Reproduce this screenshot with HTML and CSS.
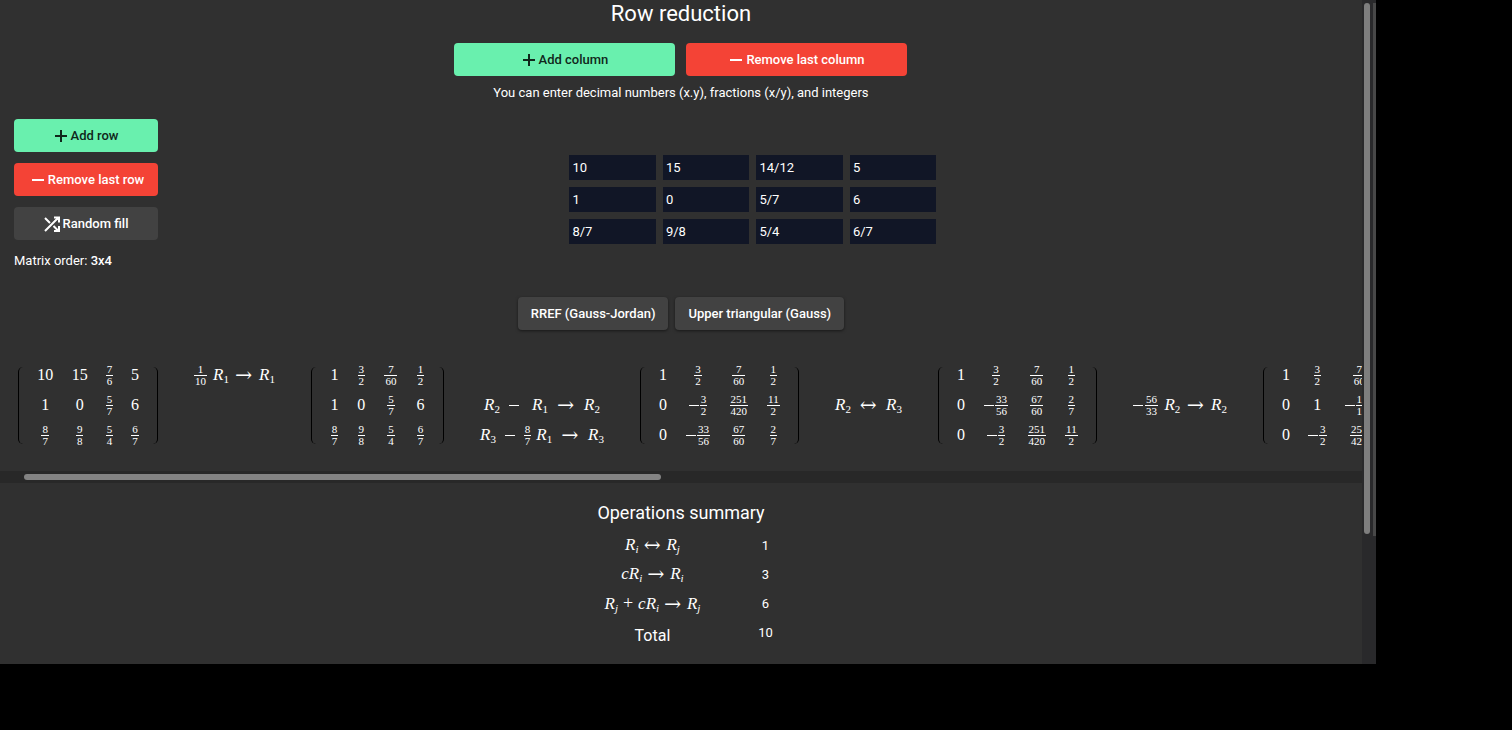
FILE: index.html
```html
<!DOCTYPE html>
<html lang="en">
<head>
<meta charset="utf-8">
<title>Row reduction</title>
<link rel="stylesheet" href="styles.css">
</head>
<body>
<div class="app">
<main class="content">
  <h1 class="title">Row reduction</h1>
  <div class="column-actions">
    <button class="btn btn-add" type="button"><svg class="icon" viewBox="0 0 14 14"><path d="M7 1v12M1 7h12"/></svg>Add column</button>
    <button class="btn btn-remove" type="button"><svg class="icon" viewBox="0 0 14 14"><path d="M1 7h12"/></svg>Remove last column</button>
  </div>
  <p class="hint">You can enter decimal numbers (x.y), fractions (x/y), and integers</p>
  <section class="editor">
    <div class="row-actions">
      <button class="btn btn-add" type="button"><svg class="icon" viewBox="0 0 14 14"><path d="M7 1v12M1 7h12"/></svg>Add row</button>
      <button class="btn btn-remove btn-tight" type="button"><svg class="icon" viewBox="0 0 14 14"><path d="M1 7h12"/></svg>Remove last row</button>
      <button class="btn btn-flat" type="button"><svg class="icon icon-shuffle" viewBox="0 0 16 16"><path d="M1 2l5 5M1 15L14 2M10 1.500h5v5M9.500 10L14 14.500M15 10v5h-5"/></svg>Random fill</button>
      <p class="order">Matrix order: <b>3x4</b></p>
    </div>
    <div class="grid-area">
      <div class="grid">
        <input aria-label="Row 1, column 1" value="10"><input aria-label="Row 1, column 2" value="15"><input aria-label="Row 1, column 3" value="14/12"><input aria-label="Row 1, column 4" value="5">
        <input aria-label="Row 2, column 1" value="1"><input aria-label="Row 2, column 2" value="0"><input aria-label="Row 2, column 3" value="5/7"><input aria-label="Row 2, column 4" value="6">
        <input aria-label="Row 3, column 1" value="8/7"><input aria-label="Row 3, column 2" value="9/8"><input aria-label="Row 3, column 3" value="5/4"><input aria-label="Row 3, column 4" value="6/7">
      </div>
    </div>
  </section>
  <div class="methods">
    <button class="btn btn-flat btn-raised" type="button">RREF (Gauss-Jordan)</button>
    <button class="btn btn-flat btn-raised" type="button">Upper triangular (Gauss)</button>
  </div>
  <section class="steps" aria-label="Steps">
    <div class="matrix matrix-md"><table>
      <tr><td>10</td><td>15</td><td><span class="frac"><i>7</i><i>6</i></span></td><td>5</td></tr>
      <tr><td>1</td><td>0</td><td><span class="frac"><i>5</i><i>7</i></span></td><td>6</td></tr>
      <tr><td><span class="frac"><i>8</i><i>7</i></span></td><td><span class="frac"><i>9</i><i>8</i></span></td><td><span class="frac"><i>5</i><i>4</i></span></td><td><span class="frac"><i>6</i><i>7</i></span></td></tr>
    </table></div>
    <div class="ops ops-scale">
      <div class="op row-1"><span class="frac"><i>1</i><i>10</i></span><var>R<sub>1</sub></var><span class="arrow">→</span><var>R<sub>1</sub></var></div>
    </div>
    <div class="matrix matrix-sm"><table>
      <tr><td>1</td><td><span class="frac"><i>3</i><i>2</i></span></td><td><span class="frac"><i>7</i><i>60</i></span></td><td><span class="frac"><i>1</i><i>2</i></span></td></tr>
      <tr><td>1</td><td>0</td><td><span class="frac"><i>5</i><i>7</i></span></td><td>6</td></tr>
      <tr><td><span class="frac"><i>8</i><i>7</i></span></td><td><span class="frac"><i>9</i><i>8</i></span></td><td><span class="frac"><i>5</i><i>4</i></span></td><td><span class="frac"><i>6</i><i>7</i></span></td></tr>
    </table></div>
    <div class="ops ops-combine">
      <div class="op row-2"><var>R<sub>2</sub></var><span class="minus"></span><var class="unit">R<sub>1</sub></var><span class="arrow">→</span><var>R<sub>2</sub></var></div>
      <div class="op row-3"><var>R<sub>3</sub></var><span class="minus"></span><span class="term"><span class="frac"><i>8</i><i>7</i></span><var>R<sub>1</sub></var></span><span class="arrow">→</span><var>R<sub>3</sub></var></div>
    </div>
    <div class="matrix matrix-lg"><table>
      <tr><td>1</td><td><span class="frac"><i>3</i><i>2</i></span></td><td><span class="frac"><i>7</i><i>60</i></span></td><td><span class="frac"><i>1</i><i>2</i></span></td></tr>
      <tr><td>0</td><td><span class="minus"></span><span class="frac"><i>3</i><i>2</i></span></td><td><span class="frac"><i>251</i><i>420</i></span></td><td><span class="frac"><i>11</i><i>2</i></span></td></tr>
      <tr><td>0</td><td><span class="minus"></span><span class="frac"><i>33</i><i>56</i></span></td><td><span class="frac"><i>67</i><i>60</i></span></td><td><span class="frac"><i>2</i><i>7</i></span></td></tr>
    </table></div>
    <div class="ops ops-swap">
      <div class="op row-2"><var>R<sub>2</sub></var><span class="arrow">↔</span><var>R<sub>3</sub></var></div>
    </div>
    <div class="matrix matrix-lg"><table>
      <tr><td>1</td><td><span class="frac"><i>3</i><i>2</i></span></td><td><span class="frac"><i>7</i><i>60</i></span></td><td><span class="frac"><i>1</i><i>2</i></span></td></tr>
      <tr><td>0</td><td><span class="minus"></span><span class="frac"><i>33</i><i>56</i></span></td><td><span class="frac"><i>67</i><i>60</i></span></td><td><span class="frac"><i>2</i><i>7</i></span></td></tr>
      <tr><td>0</td><td><span class="minus"></span><span class="frac"><i>3</i><i>2</i></span></td><td><span class="frac"><i>251</i><i>420</i></span></td><td><span class="frac"><i>11</i><i>2</i></span></td></tr>
    </table></div>
    <div class="ops ops-scale-neg">
      <div class="op row-2"><span class="term-neg"><span class="minus"></span><span class="frac"><i>56</i><i>33</i></span></span><var>R<sub>2</sub></var><span class="arrow">→</span><var>R<sub>2</sub></var></div>
    </div>
    <div class="matrix matrix-open"><table>
      <tr><td>1</td><td><span class="frac"><i>3</i><i>2</i></span></td><td><span class="frac"><i>7</i><i>60</i></span></td></tr>
      <tr><td>0</td><td>1</td><td><span class="minus"></span><span class="frac"><i>151</i><i>132</i></span></td></tr>
      <tr><td>0</td><td><span class="minus"></span><span class="frac"><i>3</i><i>2</i></span></td><td><span class="frac"><i>251</i><i>420</i></span></td></tr>
    </table></div>
  </section>
  <div class="scroll-x"><div class="thumb-x"></div></div>
  <section class="summary">
    <h2 class="subtitle">Operations summary</h2>
    <table class="counts">
      <tr><th scope="row"><var>R<sub>i</sub></var><span class="arrow">↔</span><var>R<sub>j</sub></var></th><td>1</td></tr>
      <tr><th scope="row"><var>cR<sub>i</sub></var><span class="arrow">→</span><var>R<sub>i</sub></var></th><td>3</td></tr>
      <tr><th scope="row"><var>R<sub>j</sub></var><span class="plus">+</span><var>cR<sub>i</sub></var><span class="arrow">→</span><var>R<sub>j</sub></var></th><td>6</td></tr>
      <tr><th scope="row" class="total">Total</th><td>10</td></tr>
    </table>
  </section>
</main>
<div class="scroll-y"><div class="thumb-y"></div><div class="edge"></div></div>
</div>
</body>
</html>
```
FILE: styles.css
```css
* { box-sizing: border-box; }
body {
  margin: 0;
  background: #000;
  color: #fff;
  font: 13px/20px Roboto, sans-serif;
}
h1, h2, p { margin: 0; font-weight: 400; }
.app {
  width: 91%;
  display: grid;
  grid-template-columns: minmax(0, 1fr) 14px;
  background: #303030;
}
.content { padding-bottom: 16px; }
.title { font-size: 22px; line-height: 28px; text-align: center; }

.btn {
  display: flex;
  align-items: center;
  justify-content: center;
  height: 33px;
  padding: 0 13px;
  border: 0;
  border-radius: 4px;
  font: 500 13px/20px Roboto, sans-serif;
  color: #fff;
  white-space: nowrap;
}
.btn-add { background: #69f0ae; color: #10271b; }
.btn-remove { background: #f44336; }
.btn-flat { background: #424242; }
.btn-raised { box-shadow: 0 1px 3px rgba(0, 0, 0, .5); }
.icon {
  width: 14px;
  height: 14px;
  margin-right: 3px;
  fill: none;
  stroke: currentColor;
  stroke-width: 2;
}
.icon-shuffle { width: 16px; height: 16px; }
.btn-tight { padding-right: 10px; }

.column-actions { display: flex; justify-content: center; gap: 11px; margin-top: 15px; }
.column-actions .btn { width: 221px; }
.hint { margin-top: 7px; text-align: center; }

.editor { display: flex; margin-top: 16px; padding: 0 14px; }
.row-actions { width: 144px; display: flex; flex-direction: column; gap: 11px; }
.order b { font-weight: 500; }
.grid-area { flex: 1; display: flex; justify-content: center; padding-top: 36px; }
.grid {
  width: 367px;
  display: grid;
  grid-template-columns: repeat(4, minmax(0, 1fr));
  align-content: start;
  gap: 7px;
}
.grid input {
  width: 100%;
  height: 25px;
  padding: 0 3px;
  border: 0;
  background: #111626;
  color: #fff;
  font: 13px/20px Roboto, sans-serif;
}
.methods { display: flex; justify-content: center; gap: 7px; margin-top: 26px; }

.steps {
  display: flex;
  gap: 36px;
  margin-top: 30px;
  padding: 0 0 21px 18px;
  overflow: hidden;
  font: 16px/20px "Liberation Serif", serif;
}
.steps > * { flex: none; }
.matrix { position: relative; padding: 0 10px; }
.matrix::before, .matrix::after {
  content: "";
  position: absolute;
  top: 7px;
  bottom: 6px;
  width: 5px;
}
.matrix::before { left: 0; border-left: 1px solid #000; border-radius: 5px 0 0 5px; }
.matrix::after { right: 0; border-right: 1px solid #000; border-radius: 0 5px 5px 0; }
.matrix table { width: 100%; border-collapse: collapse; }
.matrix td { height: 30px; padding: 0 8px; text-align: center; white-space: nowrap; }
.matrix-sm { width: 133px; }
.matrix-md { width: 140px; }
.matrix-lg { width: 159px; }
.matrix-open td { padding: 0 9px; }
.frac {
  display: inline-flex;
  flex-direction: column;
  vertical-align: middle;
  text-align: center;
  font-size: 11px;
  line-height: 11px;
}
.frac i { padding: 0 1px; font-style: normal; }
.frac i + i { border-top: 1px solid #fff; }
.minus {
  display: inline-block;
  width: 10px;
  height: 1px;
  margin-right: 1px;
  vertical-align: middle;
  background: #fff;
}
var { font: italic 17px/20px "Liberation Serif", serif; }
sub { font-size: 11px; line-height: 1; vertical-align: -3px; }
.steps sub { font-style: normal; }
.ops { display: grid; grid-template-rows: repeat(3, 30px); }
.ops-scale { width: 81px; }
.ops-combine { width: 124px; }
.ops-swap { width: 67px; }
.ops-scale-neg { width: 94px; }
.op { display: flex; align-items: center; justify-content: space-between; }
.ops-combine .row-2 { padding: 0 4px; }
.op .minus { margin-right: 0; }
.unit { padding-left: 4px; }
.term, .term-neg { display: flex; align-items: center; gap: 5px; }
.term-neg { gap: 2px; }
.row-1 { grid-row: 1; }
.row-2 { grid-row: 2; }
.row-3 { grid-row: 3; }
.arrow { font: 18px/20px "DejaVu Math TeX Gyre", "DejaVu Serif", serif; }
.plus { margin: 0 5px; font: 18px/20px "Liberation Serif", serif; }

.scroll-x { height: 12px; padding: 3px 0 3px 24px; background: #282828; }
.thumb-x { width: 47.6%; height: 6px; border-radius: 3px; background: #838383; }
.scroll-y {
  display: flex;
  justify-content: space-between;
  padding: 3px 0 0 2px;
  background: #29292b;
}
.thumb-y { width: 6px; height: 531px; border-radius: 3px; background: #7e7e7e; }
.edge { width: 3px; height: 533px; background: #484848; }

.summary { padding-top: 17px; }
.subtitle { font-size: 18px; line-height: 26px; text-align: center; }
.counts { margin: 6px auto 0; width: 226px; border-collapse: collapse; }
.counts th, .counts td { height: 29px; padding: 0 0 2px; text-align: center; font-weight: 400; line-height: 20px; white-space: nowrap; }
.counts th { width: 169px; }
.counts .arrow { margin: 0 5px; }
.counts .total { font-size: 16px; padding: 5px 0 0; }
```
